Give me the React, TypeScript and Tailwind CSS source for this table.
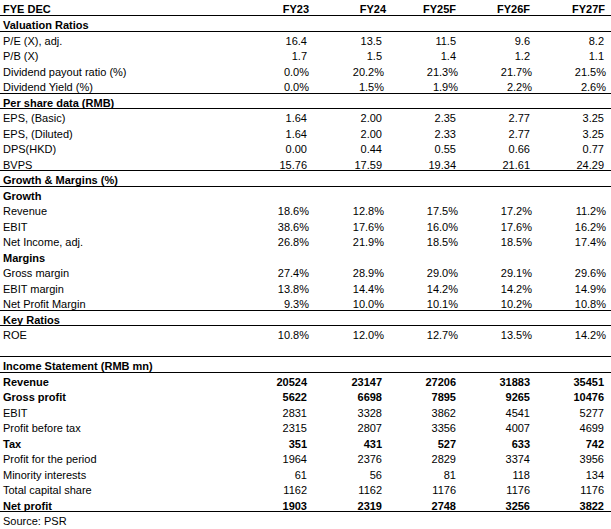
import React from "react"

type Row =
  | { kind: "section"; label: string; line?: boolean }
  | { kind: "data"; label: string; values: string[]; bold?: boolean; line?: boolean }
  | { kind: "blank"; line?: boolean }

const years = ["FY23", "FY24", "FY25F", "FY26F", "FY27F"]
// small nudges so the bold year headers sit like the sheet
const yearPad = ["pr-0", "-mr-[2px]", "pr-[2px]", "pr-[2px]", "pr-[1px]"]

const rows: Row[] = [
  { kind: "section", label: "Valuation Ratios", line: true },
  { kind: "data", label: "P/E (X), adj.", values: ["16.4", "13.5", "11.5", "9.6", "8.2"] },
  { kind: "data", label: "P/B (X)", values: ["1.7", "1.5", "1.4", "1.2", "1.1"] },
  { kind: "data", label: "Dividend payout ratio (%)", values: ["0.0%", "20.2%", "21.3%", "21.7%", "21.5%"] },
  { kind: "data", label: "Dividend Yield (%)", values: ["0.0%", "1.5%", "1.9%", "2.2%", "2.6%"], line: true },
  { kind: "section", label: "Per share data (RMB)", line: true },
  { kind: "data", label: "EPS, (Basic)", values: ["1.64", "2.00", "2.35", "2.77", "3.25"] },
  { kind: "data", label: "EPS, (Diluted)", values: ["1.64", "2.00", "2.33", "2.77", "3.25"] },
  { kind: "data", label: "DPS(HKD)", values: ["0.00", "0.44", "0.55", "0.66", "0.77"] },
  { kind: "data", label: "BVPS", values: ["15.76", "17.59", "19.34", "21.61", "24.29"], line: true },
  { kind: "section", label: "Growth & Margins (%)", line: true },
  { kind: "section", label: "Growth" },
  { kind: "data", label: "Revenue", values: ["18.6%", "12.8%", "17.5%", "17.2%", "11.2%"] },
  { kind: "data", label: "EBIT", values: ["38.6%", "17.6%", "16.0%", "17.6%", "16.2%"] },
  { kind: "data", label: "Net Income, adj.", values: ["26.8%", "21.9%", "18.5%", "18.5%", "17.4%"] },
  { kind: "section", label: "Margins" },
  { kind: "data", label: "Gross margin", values: ["27.4%", "28.9%", "29.0%", "29.1%", "29.6%"] },
  { kind: "data", label: "EBIT margin", values: ["13.8%", "14.4%", "14.2%", "14.2%", "14.9%"] },
  { kind: "data", label: "Net Profit Margin", values: ["9.3%", "10.0%", "10.1%", "10.2%", "10.8%"], line: true },
  { kind: "section", label: "Key Ratios", line: true },
  { kind: "data", label: "ROE", values: ["10.8%", "12.0%", "12.7%", "13.5%", "14.2%"] },
  { kind: "blank", line: true },
  { kind: "section", label: "Income Statement (RMB mn)", line: true },
  { kind: "data", label: "Revenue", values: ["20524", "23147", "27206", "31883", "35451"], bold: true },
  { kind: "data", label: "Gross profit", values: ["5622", "6698", "7895", "9265", "10476"], bold: true },
  { kind: "data", label: "EBIT", values: ["2831", "3328", "3862", "4541", "5277"] },
  { kind: "data", label: "Profit before tax", values: ["2315", "2807", "3356", "4007", "4699"] },
  { kind: "data", label: "Tax", values: ["351", "431", "527", "633", "742"], bold: true },
  { kind: "data", label: "Profit for the period", values: ["1964", "2376", "2829", "3374", "3956"] },
  { kind: "data", label: "Minority interests", values: ["61", "56", "81", "118", "134"] },
  { kind: "data", label: "Total capital share", values: ["1162", "1162", "1176", "1176", "1176"] },
  { kind: "data", label: "Net profit", values: ["1903", "2319", "2748", "3256", "3822"], bold: true, line: true },
]

const grid = "grid grid-cols-[235px_74px_75px_74px_74px_74px_1fr]"
const cell = "pt-[4px] leading-[11px] whitespace-nowrap"

function TableRow({ row }: { row: Row }) {
  const line = row.line ? "border-b border-black" : ""
  if (row.kind === "blank") return <div className={`h-[15.5px] ${line}`} />
  if (row.kind === "section")
    return (
      <div className={`h-[15.5px] ${line}`}>
        <div className={`${cell} pl-[3px] font-bold`}>{row.label}</div>
      </div>
    )
  return (
    <div className={`${grid} h-[15.5px] ${line} ${row.bold ? "font-bold" : ""}`}>
      <div className={`${cell} pl-[3px]`}>{row.label}</div>
      {row.values.map((v, i) => (
        <div key={i} className={`${cell} text-right ${v.endsWith("%") ? "" : "pr-[2px]"}`}>
          {v}
        </div>
      ))}
    </div>
  )
}

export default function App() {
  return (
    <div className="w-[611px] h-[529px] bg-white text-black text-[11px] font-['Liberation_Sans',Arial,sans-serif] overflow-hidden">
      <div className={`${grid} h-[16px] border-b border-black font-bold`}>
        <div className={`${cell} pl-[3px]`}>FYE DEC</div>
        {years.map((y, i) => (
          <div key={y} className={`${cell} text-right ${yearPad[i]}`}>
            {y}
          </div>
        ))}
      </div>
      {rows.map((r, i) => (
        <TableRow key={i} row={r} />
      ))}
      <div className={`${cell} pl-[3px]`}>Source: PSR</div>
    </div>
  )
}
